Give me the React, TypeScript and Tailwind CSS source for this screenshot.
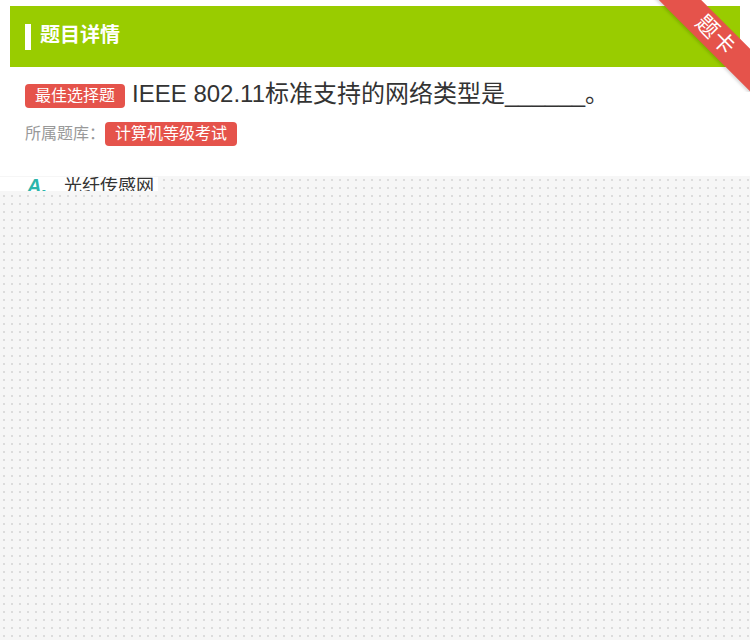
import React from 'react';

const font = { fontFamily: '"Liberation Sans", "Noto Sans CJK SC", sans-serif' };

function Ribbon() {
  return (
    <div className="absolute -right-[10px] -top-[6px] w-[100px] h-[92px] overflow-hidden pointer-events-none">
      <div className="absolute left-[-16px] top-[19px] w-[160px] h-[30px] rotate-45 bg-[#e5534b] flex items-center justify-center shadow-[0_2px_3px_rgba(0,0,0,0.15)]">
        <span className="text-white text-[22px] leading-none tracking-[1px] translate-x-[2px]">题卡</span>
      </div>
    </div>
  );
}

export default function App() {
  return (
    <div className="relative min-h-[640px] bg-white pt-[6px] px-[10px]" style={font}>
      <div className="relative bg-white">
        {/* header */}
        <div className="h-[61px] bg-[#99cc00] flex items-center pl-[15px]">
          <span className="w-[6px] h-[26px] bg-white mr-[9px]" />
          <h1 className="text-white text-[20px] font-bold -mt-[3px]">题目详情</h1>
        </div>
        <Ribbon />

        {/* question */}
        <div className="px-[15px] pt-[16px]">
          <div className="flex items-center">
            <span className="h-[24px] px-[10px] rounded-[4px] bg-[#e5534b] text-white text-[16px] leading-[24px]">最佳选择题</span>
            <p className="ml-[7px] text-[24px] leading-[28px] text-[#333] -mt-[3px]">IEEE 802.11标准支持的网络类型是______。</p>
          </div>
          <div className="flex items-center mt-[14px]">
            <span className="text-[16px] text-[#999]">所属题库：</span>
            <span className="h-[24px] px-[10px] rounded-[4px] bg-[#e5534b] text-white text-[16px] leading-[24px]">计算机等级考试</span>
          </div>
        </div>

        {/* options */}
        <div className="relative z-10 -ml-[10px] mt-[31px] w-[158px] h-[14px] overflow-hidden bg-white pl-[27px] flex items-start">
          <span className="text-[#2bb5ab] italic font-bold text-[20px] leading-[20px] -mt-[1px] w-[37px]">A.</span>
          <span className="text-[#333] text-[18px] leading-[20px] -mt-[1px]">光纤传感网</span>
        </div>
      </div>

      {/* login mask */}
      <div className="absolute inset-x-0 top-[176px] bottom-0 bg-[#f6f6f6] bg-[radial-gradient(circle,#dcdcdc_1px,transparent_1.2px)] bg-[length:8px_8px]" />
    </div>
  );
}
